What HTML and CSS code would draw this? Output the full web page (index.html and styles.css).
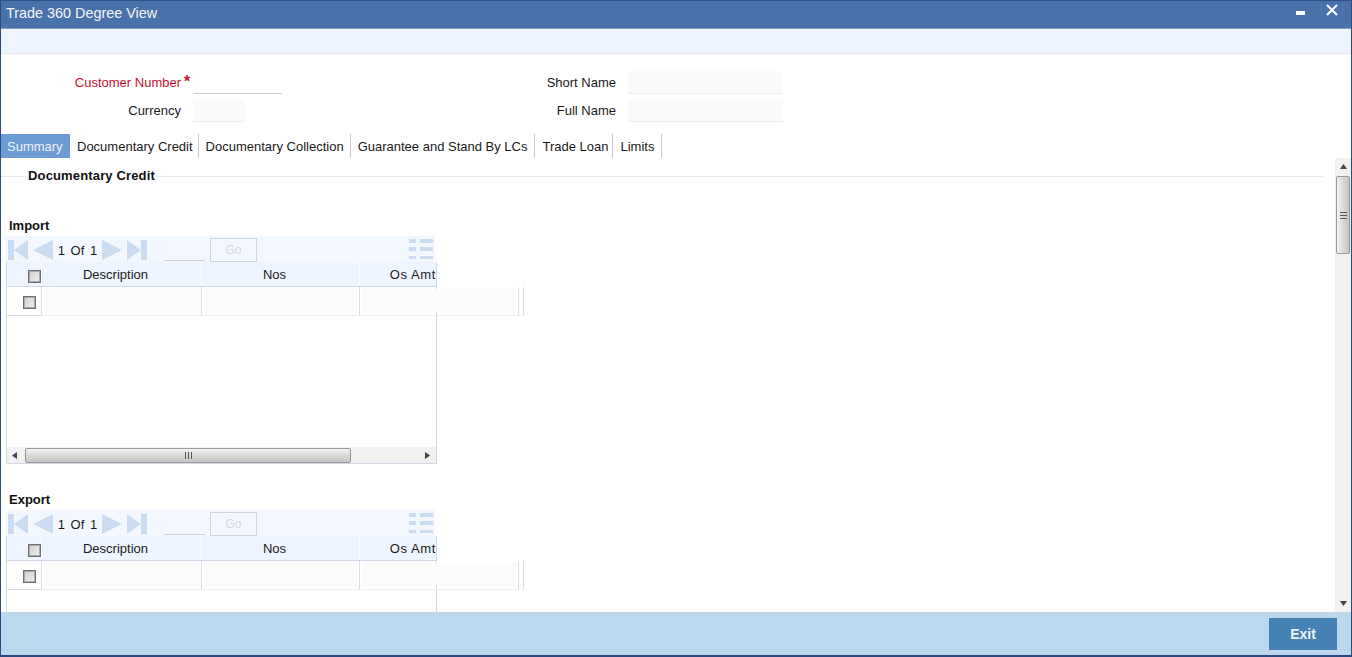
FILE: index.html
```html
<!DOCTYPE html>
<html lang="en">
<head>
<meta charset="utf-8">
<title>Trade 360 Degree View</title>
<link rel="stylesheet" href="styles.css">
</head>
<body>
<div class="window">
  <header class="titlebar">
    <span class="title">Trade 360 Degree View</span>
    <div class="win-btns">
      <svg class="win-min" width="9" height="4" viewBox="0 0 9 4"><rect width="9" height="4" fill="#fff"/></svg>
      <svg class="win-close" width="12" height="12" viewBox="0 0 12 12"><path d="M1 1 L11 11 M11 1 L1 11" stroke="#fff" stroke-width="2" fill="none"/></svg>
    </div>
  </header>
  <div class="toolbar"></div>
  <form class="form">
    <label class="lbl req">Customer Number</label><span class="star">*</span><div class="field under"></div>
    <label class="lbl">Short Name</label><span></span><div class="field filled"></div>
    <label class="lbl">Currency</label><span></span><div class="field filled w-small"></div>
    <label class="lbl">Full Name</label><span></span><div class="field filled"></div>
  </form>
  <nav class="tabs">
    <a class="tab active">Summary</a>
    <a class="tab tab-tight">Documentary Credit</a>
    <a class="tab">Documentary Collection</a>
    <a class="tab tab-wide">Guarantee and Stand By LCs</a>
    <a class="tab tab-tighter">Trade Loan</a>
    <a class="tab tab-wide">Limits</a>
  </nav>
  <div class="content">
    <main class="scroll-body">
      <div class="legend"><span class="legend-text">Documentary Credit</span></div>

      <section class="grid-section">
        <h3 class="grid-label">Import</h3>
        <div class="pager">
          <svg class="nav" width="45" height="20" viewBox="0 0 45 20"><path d="M0 0H6V20H0Z M20 0V20L6 10Z M45 0V20L25 10Z" fill="#cbdcf0"/></svg>
          <span class="page-text">1 Of 1</span>
          <svg class="nav-next" width="45" height="20" viewBox="0 0 45 20"><path d="M0 0V20L20 10Z M25 0V20L39 10Z M39 0H45V20H39Z" fill="#cbdcf0"/></svg>
          <span class="page-input"></span>
          <button class="go" type="button">Go</button>
          <svg class="list-icon" width="24" height="20" viewBox="0 0 24 20"><path d="M0 0H7V4H0Z M11 0H24V4H11Z M0 8H7V12H0Z M11 8H24V12H11Z M0 17H7V20H0Z M11 17H24V20H11Z" fill="#cbdcf0"/></svg>
        </div>
        <div class="table">
          <div class="thead">
            <div class="th c0"><span class="check"></span></div>
            <div class="th c1 center">Description</div>
            <div class="th c2 center">Nos</div>
            <div class="th c3 right">Os Amt</div>
          </div>
          <div class="tr">
            <div class="td c0"><span class="check"></span></div>
            <div class="td c1"><div class="cell-input"></div></div>
            <div class="td c2"><div class="cell-input"></div></div>
            <div class="td c3w"><div class="cell-input"></div></div>
            <div class="td c4"></div>
          </div>
          <div class="hscroll">
            <svg class="arrow" width="5" height="7" viewBox="0 0 5 7"><path d="M5 0V7L0 3.5Z" fill="#444"/></svg>
            <div class="hthumb"><span class="grip-v"></span></div>
            <svg class="arrow right-arrow" width="5" height="7" viewBox="0 0 5 7"><path d="M0 0V7L5 3.5Z" fill="#444"/></svg>
          </div>
        </div>
      </section>

      <section class="grid-section">
        <h3 class="grid-label">Export</h3>
        <div class="pager">
          <svg class="nav" width="45" height="20" viewBox="0 0 45 20"><path d="M0 0H6V20H0Z M20 0V20L6 10Z M45 0V20L25 10Z" fill="#cbdcf0"/></svg>
          <span class="page-text">1 Of 1</span>
          <svg class="nav-next" width="45" height="20" viewBox="0 0 45 20"><path d="M0 0V20L20 10Z M25 0V20L39 10Z M39 0H45V20H39Z" fill="#cbdcf0"/></svg>
          <span class="page-input"></span>
          <button class="go" type="button">Go</button>
          <svg class="list-icon" width="24" height="20" viewBox="0 0 24 20"><path d="M0 0H7V4H0Z M11 0H24V4H11Z M0 8H7V12H0Z M11 8H24V12H11Z M0 17H7V20H0Z M11 17H24V20H11Z" fill="#cbdcf0"/></svg>
        </div>
        <div class="table">
          <div class="thead">
            <div class="th c0"><span class="check"></span></div>
            <div class="th c1 center">Description</div>
            <div class="th c2 center">Nos</div>
            <div class="th c3 right">Os Amt</div>
          </div>
          <div class="tr">
            <div class="td c0"><span class="check"></span></div>
            <div class="td c1"><div class="cell-input"></div></div>
            <div class="td c2"><div class="cell-input"></div></div>
            <div class="td c3w"><div class="cell-input"></div></div>
            <div class="td c4"></div>
          </div>
        </div>
      </section>
    </main>
    <aside class="vscroll">
      <svg class="v-arrow" width="7" height="5" viewBox="0 0 7 5"><path d="M0 5H7L3.5 0Z" fill="#444"/></svg>
      <div class="vthumb"><span class="grip-h"></span></div>
      <svg class="v-arrow v-arrow-down" width="7" height="5" viewBox="0 0 7 5"><path d="M0 0H7L3.5 5Z" fill="#444"/></svg>
    </aside>
  </div>
  <footer class="footer">
    <button class="exit" type="button">Exit</button>
  </footer>
</div>
</body>
</html>
```
FILE: styles.css
```css
* { box-sizing: border-box; }
html, body { margin: 0; padding: 0; height: 100%; overflow: hidden; }
body { font-family: "Liberation Sans", Arial, sans-serif; font-size: 13px; color: #1a1a1a; background: #fff; }

.window { width: 1352px; height: 657px; display: flex; flex-direction: column; border: 1px solid #2a4a80; border-top-color: #2f5089; border-width: 1px 1px 2px 1px; background: #fff; }

.titlebar { height: 28px; flex: none; background: #4a72aa; border-bottom: 1px solid #7f9ab8; color: #f2f6fb; display: flex; align-items: center; justify-content: space-between; padding: 0 13px 3px 5px; }
.title { font-size: 14.4px; }
.win-btns { display: flex; align-items: flex-start; gap: 21px; align-self: stretch; }
.win-min { margin-top: 10px; }
.win-close { margin-top: 3px; }

.toolbar { height: 25px; flex: none; background: #eef5fe; border-bottom: 1px solid #e6e9ee; }

.form { flex: none; height: 80px; padding-top: 16px; display: grid; grid-template-columns: 180px 12px 89px 334px 12px 155px; grid-auto-rows: 24px; row-gap: 4px; align-items: center; }
.lbl { text-align: right; }
.req { color: #c8102e; }
.star { color: #c8102e; font-size: 16px; font-weight: bold; line-height: 16px; padding-left: 3px; align-self: start; margin-top: 4px; }
.field { height: 23px; }
.under { border-bottom: 1px solid #c9c9c9; }
.filled { background: #fafafa; border-bottom: 1px solid #eeeeee; }
.w-small { width: 52px; }

.tabs { flex: none; height: 24px; display: flex; }
.tab { padding: 0 6px 0 7px; line-height: 25px; border-right: 1px solid #c8c8c8; color: #1a1a1a; white-space: nowrap; }
.tab.active { background: #6d9bd3; color: #eef4fb; border-right: 0; width: 69px; padding: 0 0 0 6px; }
.tab-tight { padding-right: 5px; }
.tab-wide { padding-right: 7px; }
.tab-tighter { padding-right: 4px; }

.content { flex: 1; min-height: 0; display: flex; }
.scroll-body { flex: 1; min-width: 0; overflow: hidden; position: relative; }

.legend { height: 58px; position: relative; padding-left: 27px; }
.legend::before { content: ""; display: block; position: absolute; left: 0; right: 12px; top: 18px; border-top: 1px solid #e8e8e8; }
.legend-text { position: relative; display: inline-block; background: #fff; font-weight: bold; line-height: 20px; height: 20px; padding-right: 1px; font-size: 13px; letter-spacing: 0.15px; color: #111; margin-top: 7px; padding-top: 1px; }

.grid-section { height: 274px; flex: none; }
.grid-label { margin: 0; height: 20px; line-height: 19px; font-size: 13px; font-weight: bold; padding-left: 8px; color: #111; }

.pager { width: 430px; margin-left: 4px; height: 26px; background: #f3f8fe; display: flex; align-items: flex-start; }
.nav { margin: 4px 0 0 3px; flex: none; }
.nav-next { margin: 4px 0 0 0; flex: none; }
.page-text { width: 49px; flex: none; text-align: center; white-space: nowrap; line-height: 29px; word-spacing: 2px; }
.page-input { width: 41px; height: 25px; margin-left: 17px; border-bottom: 1px solid #d0d0d0; flex: none; }
.go { width: 47px; height: 24px; margin: 2px 0 0 5px; padding: 0; flex: none; background: #f3f8fe; border: 1px solid #cdd5de; color: #d4dbe2; font: 12px "Liberation Sans", Arial, sans-serif; }
.list-icon { margin: 3px 0 0 152px; flex: none; }

.table { width: 431px; height: 202px; margin-left: 5px; border: 1px solid #d0d9e5; border-top: 0; display: flex; flex-direction: column; }
.thead { height: 25px; flex: none; display: flex; background: #eef5fe; border-bottom: 1px solid #d0d9e5; overflow: hidden; }
.th { line-height: 25px; border-right: 1px solid #fff; flex: none; height: 24px; }
.c0 { width: 35px; }
.c1 { width: 160px; }
.c2 { width: 158px; }
.c3 { width: 76px; border-right: 0; }
.c3w { width: 159px; }
.c4 { width: 4px; }
.center { text-align: center; padding-right: 12px; }
.right { text-align: right; white-space: nowrap; letter-spacing: 0.6px; }
.th.c0 { display: flex; align-items: flex-start; justify-content: flex-end; padding: 8px 0 0 0; }

.tr { height: 29px; flex: none; display: flex; width: 517px; border-bottom: 1px solid #f6eee8; }
.td { height: 28px; flex: none; border-right: 1px solid #d6dee8; padding: 2px 2px 0; }
.td.c0 { border-bottom: 1px solid #d6dee8; height: 29px; padding: 9px 0 0 16px; }
.cell-input { height: 23px; background: #fbfbfb; }

.check { display: block; width: 13px; height: 13px; border: 1px solid #707070; box-shadow: inset 0 0 0 1px #aaa; background: linear-gradient(135deg, #cfcfcf, #f0f0f0); }

.hscroll { margin-top: auto; height: 16px; flex: none; background: #f1f1f1; display: flex; align-items: center; }
.arrow { margin-left: 5px; flex: none; }
.right-arrow { margin-left: 74px; }
.hthumb { width: 326px; height: 15px; margin-left: 8px; border: 1px solid #999; border-radius: 2px; background: linear-gradient(#f2f2f2, #dcdcdc 45%, #c4c4c4); display: flex; align-items: center; justify-content: center; flex: none; }
.grip-v { width: 7px; height: 7px; background: repeating-linear-gradient(90deg, #555 0 1px, transparent 1px 3px); }

.vscroll { width: 16px; flex: none; background: #f1f1f1; display: flex; flex-direction: column; align-items: center; }
.v-arrow { margin-top: 6px; flex: none; }
.v-arrow-down { margin-top: auto; margin-bottom: 6px; }
.vthumb { width: 14px; height: 78px; margin-top: 7px; border: 1px solid #999; border-radius: 2px; background: linear-gradient(90deg, #f2f2f2, #dcdcdc 45%, #c4c4c4); display: flex; align-items: center; justify-content: center; flex: none; }
.grip-h { width: 7px; height: 7px; background: repeating-linear-gradient(#555 0 1px, transparent 1px 3px); }

.footer { height: 43px; flex: none; background: #bdd8ec; display: flex; justify-content: flex-end; padding: 6px 14px 0 0; }
.exit { width: 68px; height: 32px; border: 0; padding: 0; background: #4682b4; color: #eef4fa; font: bold 14px "Liberation Sans", Arial, sans-serif; }
```
